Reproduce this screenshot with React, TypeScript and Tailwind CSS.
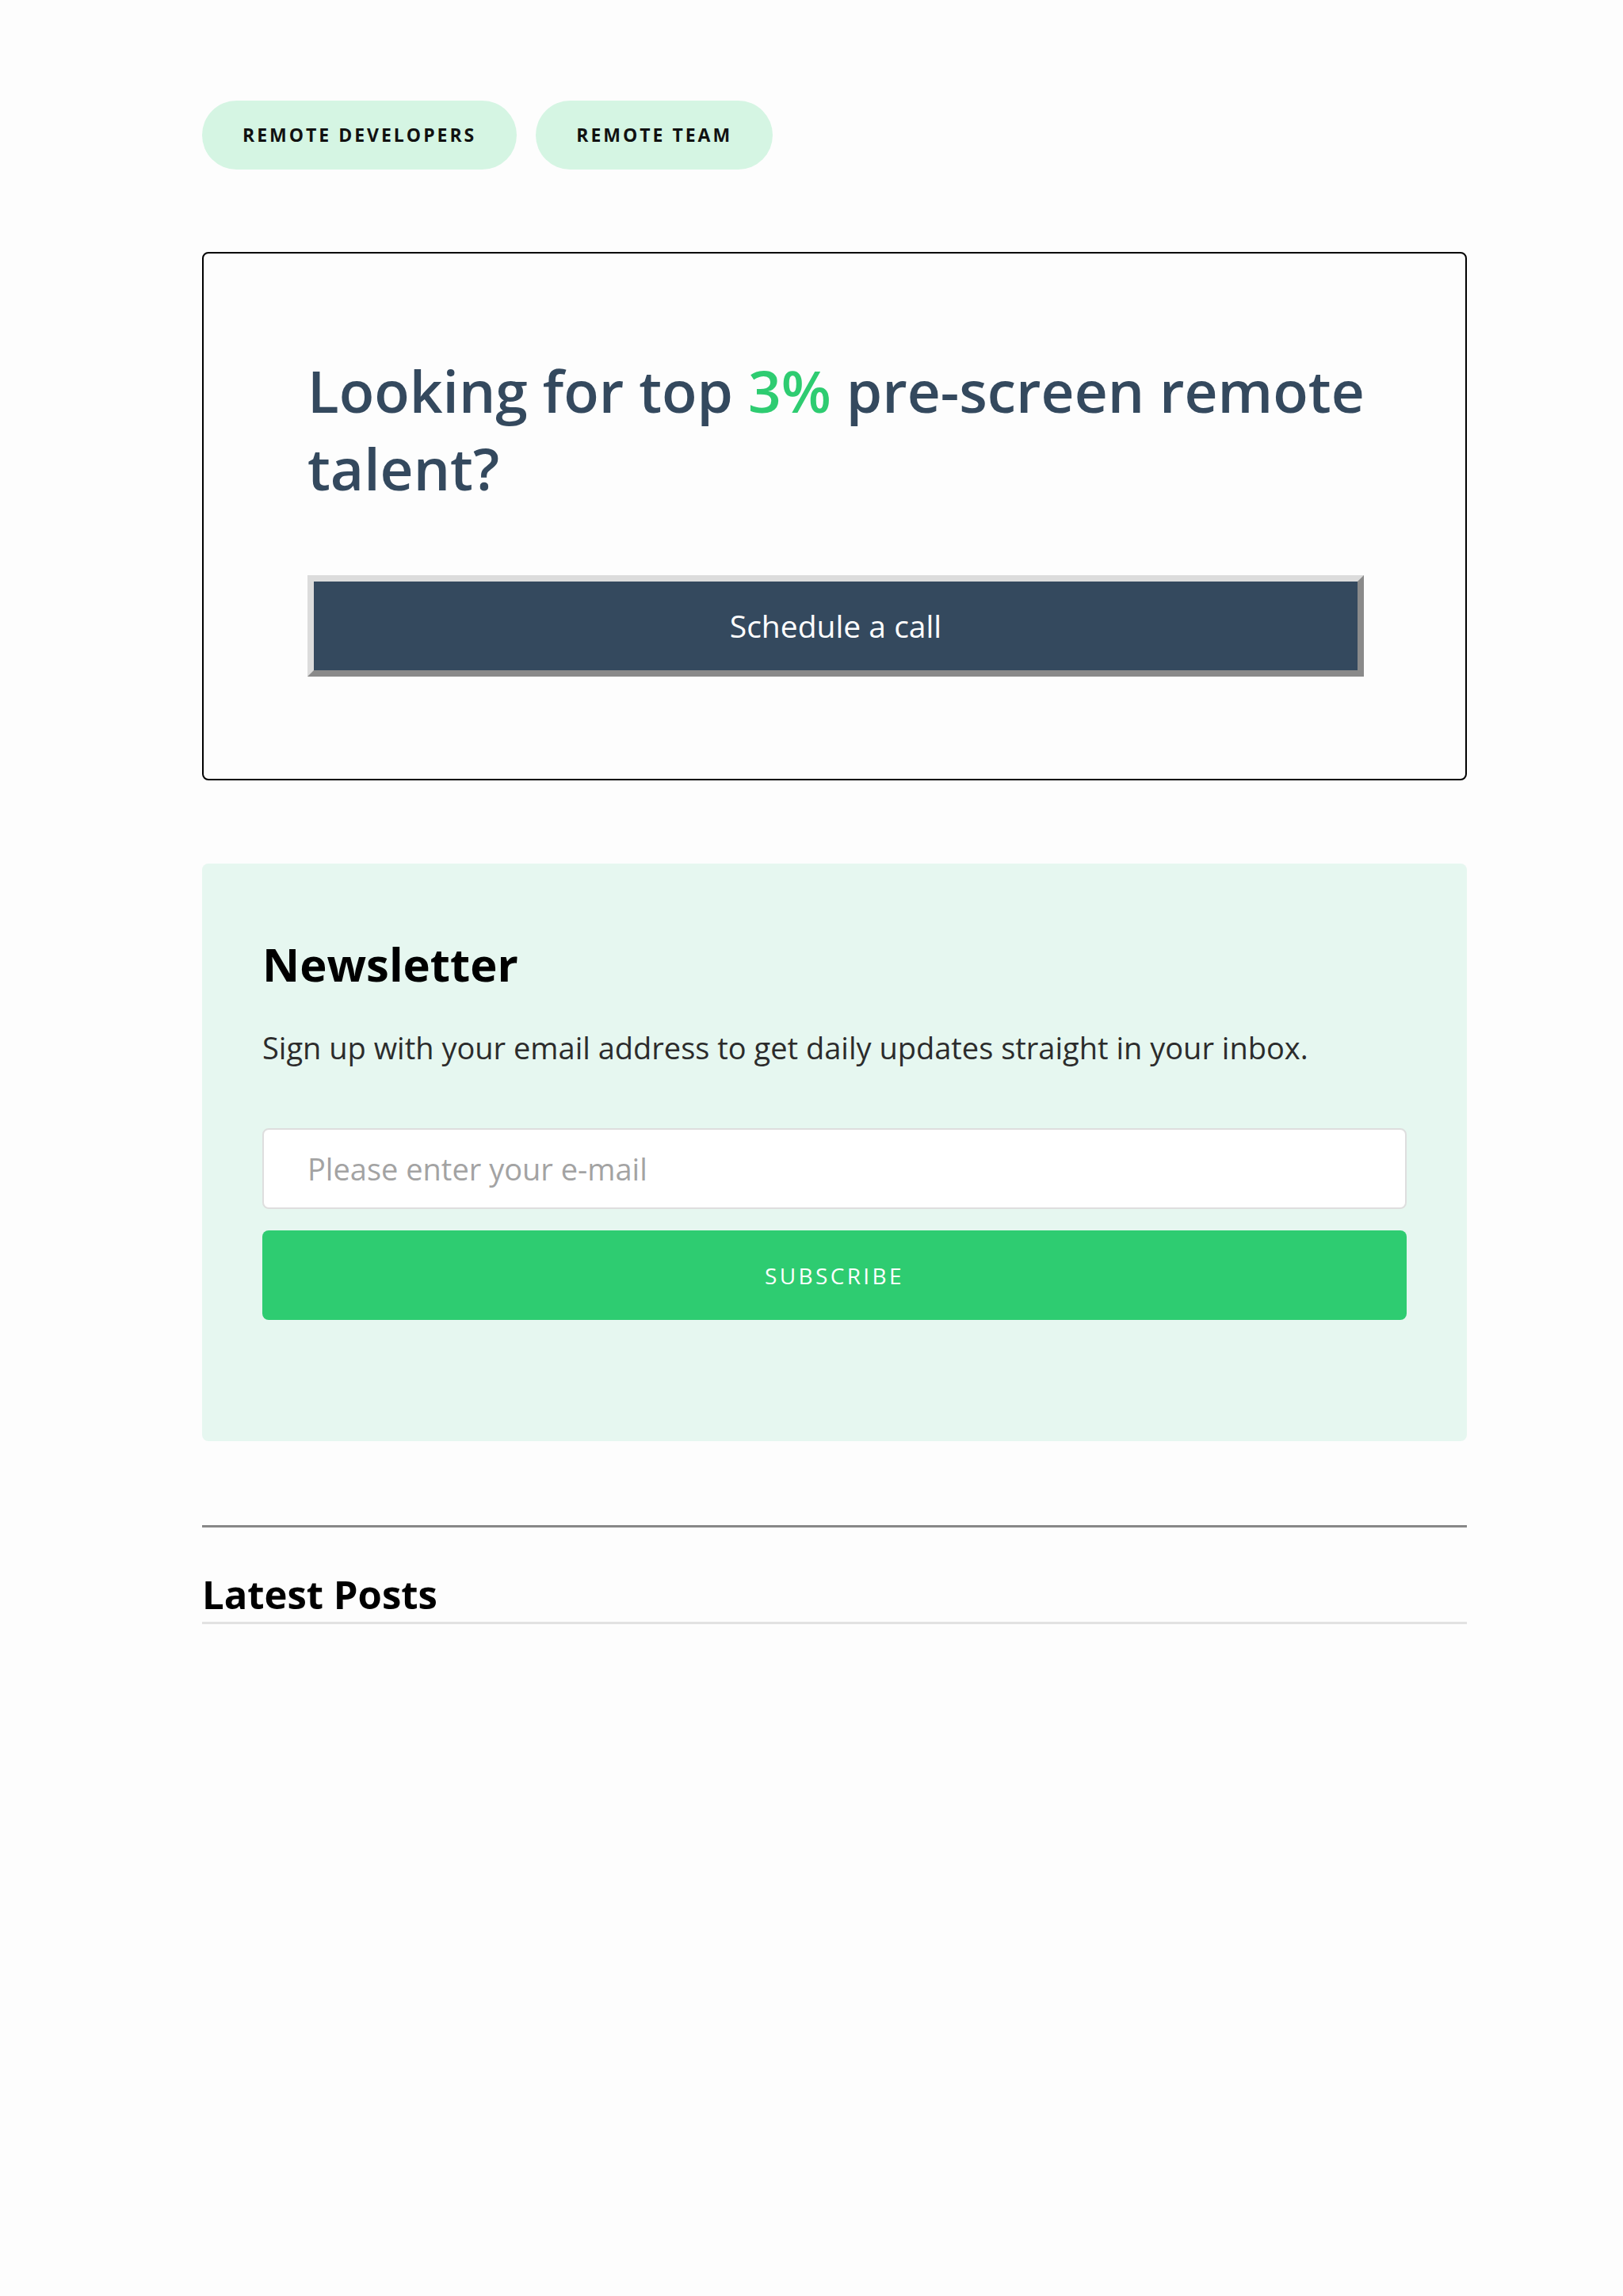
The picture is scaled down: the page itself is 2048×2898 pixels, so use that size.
import React from 'react';

const font = { fontFamily: '"Open Sans", "Noto Sans", sans-serif' };

const tags = ['Remote Developers', 'Remote Team'];

export default function App() {
  return (
    <div className="min-h-[2898px] bg-[#fdfdfd] pt-[127px]" style={font}>
      <div className="ml-[255px] w-[1596px]">
        {/* Tags */}
        <div className="flex gap-[24px]">
          {tags.map((tag) => (
            <a
              key={tag}
              href="#"
              className="flex h-[87px] items-center rounded-full bg-[#d5f5e3] px-[51px] text-[23px] font-bold uppercase tracking-[0.13em] text-[#111]"
            >
              {tag}
            </a>
          ))}
        </div>

        {/* Call to action */}
        <section className="mt-[104px] rounded-[8px] border-2 border-black pb-[129px] pl-[131px] pr-[128px] pt-[124px]">
          <h2 className="mr-[-60px] text-[73px] font-semibold leading-[98px] text-[#34495e]">
            Looking for top <span className="text-[#2ecc71]">3%</span> pre-screen remote talent?
          </h2>
          <button className="mt-[86px] h-[128px] w-full border-[8px] border-t-[#dcdcdc] border-l-[#dcdcdc] border-b-[#8a8a8a] border-r-[#8a8a8a] bg-[#34495e] text-[39px] text-white">
            Schedule a call
          </button>
        </section>

        {/* Newsletter */}
        <section className="mt-[105px] rounded-[8px] bg-[#e6f7f0] px-[76px] pb-[153px] pt-[82px]">
          <h3 className="text-[58px] font-bold leading-[90px] text-black">Newsletter</h3>
          <p className="mt-[33px] text-[38px] leading-[54px] text-[#2c2c2c]">
            Sign up with your email address to get daily updates straight in your inbox.
          </p>
          <input
            type="email"
            placeholder="Please enter your e-mail"
            className="mt-[75px] block h-[102px] w-full rounded-[8px] border-2 border-[#dedede] bg-white px-[55px] text-[38px] placeholder:text-[#a3a3a3] outline-none"
          />
          <button className="mt-[27px] block h-[113px] w-full rounded-[8px] bg-[#2ecc71] text-[28px] uppercase tracking-[0.12em] text-white">
            Subscribe
          </button>
        </section>

        {/* Latest posts */}
        <div className="mt-[106px] border-t-[3px] border-[#888]">
          <h3 className="mt-[52px] border-b-[3px] border-[#e2e2e2] pb-[2px] text-[49px] font-bold leading-[65px] text-black">
            Latest Posts
          </h3>
        </div>
      </div>
    </div>
  );
}
